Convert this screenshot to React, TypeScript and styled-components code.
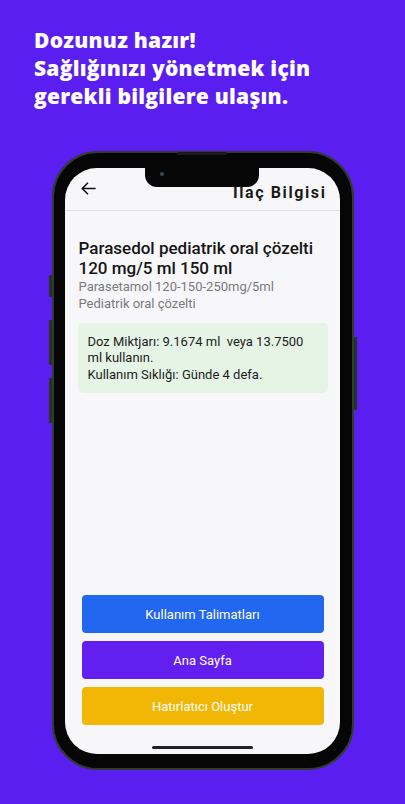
import React from "react";
import styled, { createGlobalStyle } from "styled-components";

const Global = createGlobalStyle`
  html, body { margin: 0; padding: 0; }
  body {
    background: #5b1ef0;
    width: 405px;
    height: 804px;
    overflow: hidden;
    font-family: Roboto, "Noto Sans", sans-serif;
  }
`;

const Page = styled.div`
  width: 405px;
  height: 804px;
  background: #5b1ef0;
  display: flex;
  flex-direction: column;
  align-items: stretch;
  box-sizing: border-box;
  padding-top: 26px;
`;

const Headline = styled.h1`
  margin: 0 0 0 34px;
  color: #ffffff;
  font-family: "Open Sans", "Noto Sans", sans-serif;
  font-weight: 800;
  font-size: 21px;
  line-height: 28px;
  letter-spacing: 0.25px;
`;

const PhoneWrap = styled.div`
  position: relative;
  margin: 41px auto 0;
  width: 302px;
  height: 619px;
`;

const Frame = styled.div`
  width: 100%;
  height: 100%;
  box-sizing: border-box;
  border: 2px solid #2e3c2b;
  border-radius: 46px;
  background: #060606;
  padding: 15px 12px 14px 11px;
  display: flex;
`;

const SideButton = styled.div<{ $side: "left" | "right"; $top: number; $h: number }>`
  position: absolute;
  ${(p) => (p.$side === "left" ? "left: -3px;" : "right: -3px;")}
  top: ${(p) => p.$top}px;
  width: 3px;
  height: ${(p) => p.$h}px;
  background: #263323;
  border-radius: 1px;
`;

const Speaker = styled.div`
  position: absolute;
  top: 1px;
  left: 125px;
  width: 50px;
  height: 3px;
  border-radius: 2px;
  background: #1a1a1a;
`;

const Screen = styled.div`
  position: relative;
  flex: 1;
  background: #f7f7fa;
  border-radius: 32px;
  overflow: hidden;
  display: flex;
  flex-direction: column;
`;

const Notch = styled.div`
  position: absolute;
  top: 0;
  left: 80px;
  width: 114px;
  height: 19px;
  background: #060606;
  border-radius: 0 0 12px 12px;
  z-index: 2;
`;

const Camera = styled.div`
  position: absolute;
  top: 4px;
  left: 15px;
  width: 4px;
  height: 4px;
  border-radius: 50%;
  background: #3a4a5c;
`;

const Header = styled.div`
  height: 43px;
  flex: none;
  display: flex;
  align-items: center;
  justify-content: space-between;
  padding: 0 13px 0 16px;
  border-bottom: 1px solid #dedee3;
  box-sizing: border-box;
`;

const BackBtn = styled.div`
  display: flex;
  align-items: center;
  margin-top: -2px;
`;

const HeaderTitle = styled.div`
  font-family: Roboto, sans-serif;
  font-weight: 700;
  font-size: 16px;
  letter-spacing: 1.6px;
  color: #1b1b1b;
  margin-top: 6px;
`;

const Body = styled.div`
  flex: 1;
  display: flex;
  flex-direction: column;
  padding: 28px 13px 0 14px;
`;

const DrugName = styled.div`
  font-weight: 500;
  font-size: 17px;
  line-height: 19.5px;
  color: #151515;
`;

const SubText = styled.div`
  font-size: 13px;
  line-height: 17px;
  color: #7a7a7a;
`;

const DoseBox = styled.div`
  margin: 11px -1px 0 -1px;
  background: #e6f4e6;
  border-radius: 5px;
  padding: 11px 10px 10px 10px;
  font-size: 13px;
  line-height: 15.5px;
  color: #1d1d1d;
`;

const DoseLine = styled.div<{ $gap?: number }>`
  margin-top: ${(p) => p.$gap ?? 0}px;
`;

const Spacer = styled.div`
  flex: 1;
`;

const Buttons = styled.div`
  display: flex;
  flex-direction: column;
  gap: 8px;
  padding: 0 3px 29px 3px;
`;

const ActionButton = styled.button<{ $bg: string }>`
  height: 38px;
  border: none;
  border-radius: 4px;
  background: ${(p) => p.$bg};
  color: #ffffff;
  font-family: Roboto, sans-serif;
  font-size: 13px;
  display: flex;
  align-items: center;
  justify-content: center;
  padding: 0;
`;

const HomeIndicator = styled.div`
  position: absolute;
  bottom: 5px;
  left: 87px;
  width: 101px;
  height: 3px;
  border-radius: 2px;
  background: #222;
`;

const ArrowLeft = () => (
  <svg width="15" height="13" viewBox="0 0 15 13" fill="none">
    <path d="M14 6.5H1.5M6.5 1.2L1.2 6.5L6.5 11.8" stroke="#111" strokeWidth="1.6" strokeLinecap="round" strokeLinejoin="round" />
  </svg>
);

export default function App() {
  return (
    <>
      <Global />
      <Page>
        <Headline>
          Dozunuz hazır!
          <br />
          Sağlığınızı yönetmek için
          <br />
          gerekli bilgilere ulaşın.
        </Headline>
        <PhoneWrap>
          <SideButton $side="left" $top={124} $h={22} />
          <SideButton $side="left" $top={169} $h={45} />
          <SideButton $side="left" $top={227} $h={45} />
          <SideButton $side="right" $top={186} $h={73} />
          <Frame>
            <Speaker />
            <Screen>
              <Notch>
                <Camera />
              </Notch>
              <Header>
                <BackBtn>
                  <ArrowLeft />
                </BackBtn>
                <HeaderTitle>İlaç Bilgisi</HeaderTitle>
              </Header>
              <Body>
                <DrugName>Parasedol pediatrik oral çözelti 120 mg/5 ml 150 ml</DrugName>
                <SubText>Parasetamol 120-150-250mg/5ml</SubText>
                <SubText>Pediatrik oral çözelti</SubText>
                <DoseBox>
                  <DoseLine>Doz Miktjarı: 9.1674 ml&nbsp; veya 13.7500 ml kullanın.</DoseLine>
                  <DoseLine $gap={2}>Kullanım Sıklığı: Günde 4 defa.</DoseLine>
                </DoseBox>
                <Spacer />
                <Buttons>
                  <ActionButton $bg="#2167ef">Kullanım Talimatları</ActionButton>
                  <ActionButton $bg="#631ff0">Ana Sayfa</ActionButton>
                  <ActionButton $bg="#f2b605">Hatırlatıcı Oluştur</ActionButton>
                </Buttons>
              </Body>
              <HomeIndicator />
            </Screen>
          </Frame>
        </PhoneWrap>
      </Page>
    </>
  );
}
